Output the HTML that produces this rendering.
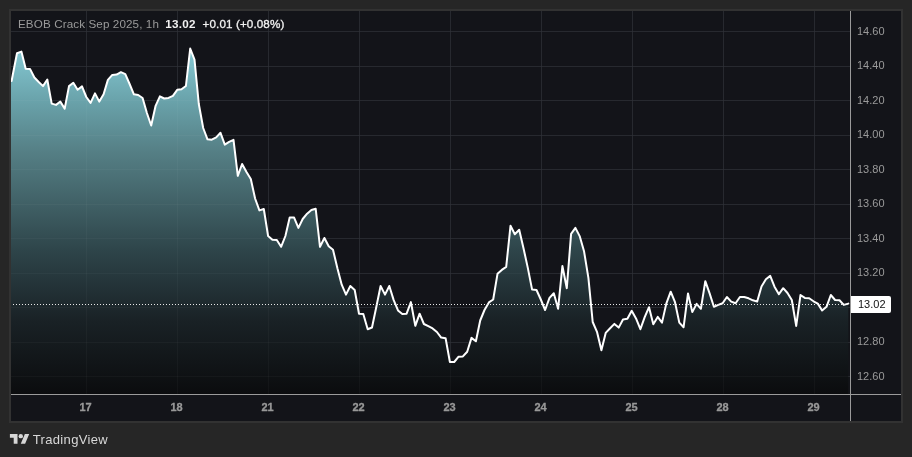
<!DOCTYPE html>
<html><head><meta charset="utf-8"><title>EBOB Crack Sep 2025</title>
<style>
html,body{margin:0;padding:0;}
body{will-change:transform;width:912px;height:457px;background:#262626;overflow:hidden;position:relative;font-family:"Liberation Sans",sans-serif;}
#panel{position:absolute;left:9px;top:9px;width:890px;height:410px;border:2px solid #323232;background:#131419;}
svg{position:absolute;left:0;top:0;}
.grid line{stroke:#212329;stroke-width:1;shape-rendering:crispEdges;}
.grid2 line{stroke:rgba(255,255,255,0.03);stroke-width:1;shape-rendering:crispEdges;}
.pl{position:absolute;left:857px;width:40px;font-size:11px;line-height:14px;color:#9a9a9a;white-space:nowrap;}
.dl{position:absolute;top:400px;width:40px;text-align:center;font-size:11px;line-height:14px;font-weight:bold;color:#999999;-webkit-text-stroke:0.3px #999999;}
#title{position:absolute;left:0;top:17px;font-size:11.65px;line-height:14px;color:#9a9a9a;white-space:nowrap;}
#title span,#title b,#title i{position:absolute;top:0;}
#title b{color:#f2f2f2;font-weight:bold;}
#title i{color:#f2f2f2;font-style:normal;}
#last{position:absolute;left:851px;top:296px;width:40px;height:17px;border-radius:0 2px 2px 0;background:#ffffff;color:#111111;font-size:11px;line-height:17px;}
#last span{position:absolute;left:7px;top:0;}
#tv{position:absolute;left:32.8px;top:431.5px;letter-spacing:0.33px;font-size:13px;line-height:16px;color:#d8d8d8;white-space:nowrap;}
</style></head><body>
<div id="panel"></div>
<svg width="912" height="457" viewBox="0 0 912 457">
<defs>
<linearGradient id="ag" gradientUnits="userSpaceOnUse" x1="0" y1="45" x2="0" y2="394">
<stop offset="0.0000" stop-color="rgb(133, 201, 212)"/>
<stop offset="0.0430" stop-color="rgb(127, 193, 203)"/>
<stop offset="0.1576" stop-color="rgb(106, 163, 171)"/>
<stop offset="0.3066" stop-color="rgb(85, 127, 133)"/>
<stop offset="0.5874" stop-color="rgb(46, 69, 74)"/>
<stop offset="0.7937" stop-color="rgb(25, 33, 37)"/>
<stop offset="1.0000" stop-color="rgb(11, 12, 14)"/>
</linearGradient>
<clipPath id="cp"><rect x="11" y="11" width="839" height="383"/></clipPath>
</defs>
<g class="grid"><line x1="11" x2="850" y1="31.5" y2="31.5"/><line x1="11" x2="850" y1="66.5" y2="66.5"/><line x1="11" x2="850" y1="100.5" y2="100.5"/><line x1="11" x2="850" y1="135.5" y2="135.5"/><line x1="11" x2="850" y1="169.5" y2="169.5"/><line x1="11" x2="850" y1="204.5" y2="204.5"/><line x1="11" x2="850" y1="238.5" y2="238.5"/><line x1="11" x2="850" y1="273.5" y2="273.5"/><line x1="11" x2="850" y1="307.5" y2="307.5"/><line x1="11" x2="850" y1="342.5" y2="342.5"/><line x1="11" x2="850" y1="376.5" y2="376.5"/><line y1="11" y2="394" x1="86.5" x2="86.5"/><line y1="11" y2="394" x1="177.5" x2="177.5"/><line y1="11" y2="394" x1="268.5" x2="268.5"/><line y1="11" y2="394" x1="359.5" x2="359.5"/><line y1="11" y2="394" x1="450.5" x2="450.5"/><line y1="11" y2="394" x1="541.5" x2="541.5"/><line y1="11" y2="394" x1="632.5" x2="632.5"/><line y1="11" y2="394" x1="723.5" x2="723.5"/><line y1="11" y2="394" x1="814.5" x2="814.5"/></g>
<g clip-path="url(#cp)">
<polygon points="11,394 11,81.0 11.6,81.0 12.7,75.3 17.0,53.2 21.4,51.6 25.7,68.7 30.0,68.9 34.4,77.5 38.7,82.0 43.0,86.1 47.3,79.5 51.7,103.6 56.0,104.9 60.3,101.6 64.7,108.6 69.0,86.1 73.3,82.8 77.6,89.7 82.0,86.4 86.3,97.0 90.6,102.9 95.0,93.4 99.3,101.6 103.6,94.3 107.9,79.9 112.3,74.9 116.6,74.6 120.9,72.2 125.3,74.2 129.6,84.0 133.9,94.3 138.2,95.0 142.6,98.0 146.9,113.0 151.2,125.5 155.6,105.8 159.9,96.3 164.2,98.5 168.5,97.9 172.9,95.9 177.2,89.8 181.5,89.3 185.9,86.0 190.2,48.5 194.5,59.7 198.8,104.0 203.2,128.0 207.5,139.3 211.8,139.7 216.2,137.4 220.5,132.8 224.8,144.6 229.1,141.8 233.5,139.8 237.8,175.8 242.1,164.0 246.5,172.0 250.8,179.0 255.1,198.5 259.4,210.4 263.8,209.0 268.1,236.0 272.4,239.7 276.8,240.0 281.1,246.8 285.4,236.0 289.7,217.6 294.1,217.6 298.4,227.9 302.7,219.0 307.1,213.7 311.4,210.0 315.7,208.8 320.0,246.8 324.4,238.0 328.7,246.2 333.0,249.7 337.4,268.3 341.7,284.7 346.0,294.6 350.3,286.0 354.7,290.0 359.0,313.7 363.3,314.0 367.7,329.2 372.0,327.5 376.3,307.0 380.6,286.0 385.0,294.6 389.3,286.0 393.6,299.9 398.0,310.4 402.3,314.0 406.6,313.7 410.9,302.1 415.3,325.8 419.6,313.7 423.9,324.0 428.3,326.2 432.6,328.4 436.9,332.0 441.2,337.6 445.6,338.2 449.9,362.0 454.2,362.0 458.6,356.7 462.9,356.4 467.2,351.8 471.5,337.9 475.9,341.3 480.2,320.5 484.5,310.0 488.9,302.4 493.2,299.5 497.5,273.8 501.8,269.9 506.2,266.9 510.5,225.8 514.8,234.3 519.2,229.7 523.5,248.2 527.8,267.9 532.1,289.6 536.5,290.0 540.8,299.5 545.1,310.0 549.5,297.9 553.8,293.2 558.1,308.8 562.4,266.0 566.8,288.2 571.1,233.8 575.4,227.9 579.8,236.4 584.1,251.6 588.4,277.9 592.7,322.0 597.1,332.2 601.4,350.3 605.7,332.9 610.1,328.3 614.4,323.9 618.7,327.6 623.0,319.5 627.4,318.8 631.7,310.8 636.0,318.4 640.4,329.2 644.7,317.1 649.0,307.2 653.3,324.3 657.7,316.9 662.0,322.6 666.3,303.6 670.7,291.7 675.0,302.2 679.3,322.6 683.6,327.2 688.0,293.4 692.3,312.1 696.6,303.9 700.9,308.8 705.3,281.2 709.6,293.4 713.9,306.8 718.3,304.9 722.6,303.2 726.9,297.0 731.2,301.6 735.6,303.2 739.9,297.0 744.2,297.0 748.6,298.3 752.9,300.3 757.2,301.6 761.5,286.4 765.9,279.2 770.2,275.9 774.5,286.7 778.9,294.2 783.2,288.2 787.5,293.0 791.8,300.0 796.2,325.9 800.5,295.0 804.8,297.9 809.2,298.3 813.5,301.3 817.8,303.6 822.1,310.5 826.5,306.8 830.8,295.0 835.1,300.0 839.5,300.3 843.8,304.9 848.3,303.6 848.3,394" fill="url(#ag)"/>
<g class="grid2"><line x1="11" x2="850" y1="31.5" y2="31.5"/><line x1="11" x2="850" y1="66.5" y2="66.5"/><line x1="11" x2="850" y1="100.5" y2="100.5"/><line x1="11" x2="850" y1="135.5" y2="135.5"/><line x1="11" x2="850" y1="169.5" y2="169.5"/><line x1="11" x2="850" y1="204.5" y2="204.5"/><line x1="11" x2="850" y1="238.5" y2="238.5"/><line x1="11" x2="850" y1="273.5" y2="273.5"/><line x1="11" x2="850" y1="307.5" y2="307.5"/><line x1="11" x2="850" y1="342.5" y2="342.5"/><line x1="11" x2="850" y1="376.5" y2="376.5"/><line y1="11" y2="394" x1="86.5" x2="86.5"/><line y1="11" y2="394" x1="177.5" x2="177.5"/><line y1="11" y2="394" x1="268.5" x2="268.5"/><line y1="11" y2="394" x1="359.5" x2="359.5"/><line y1="11" y2="394" x1="450.5" x2="450.5"/><line y1="11" y2="394" x1="541.5" x2="541.5"/><line y1="11" y2="394" x1="632.5" x2="632.5"/><line y1="11" y2="394" x1="723.5" x2="723.5"/><line y1="11" y2="394" x1="814.5" x2="814.5"/></g>
<polyline points="11.6,81.0 12.7,75.3 17.0,53.2 21.4,51.6 25.7,68.7 30.0,68.9 34.4,77.5 38.7,82.0 43.0,86.1 47.3,79.5 51.7,103.6 56.0,104.9 60.3,101.6 64.7,108.6 69.0,86.1 73.3,82.8 77.6,89.7 82.0,86.4 86.3,97.0 90.6,102.9 95.0,93.4 99.3,101.6 103.6,94.3 107.9,79.9 112.3,74.9 116.6,74.6 120.9,72.2 125.3,74.2 129.6,84.0 133.9,94.3 138.2,95.0 142.6,98.0 146.9,113.0 151.2,125.5 155.6,105.8 159.9,96.3 164.2,98.5 168.5,97.9 172.9,95.9 177.2,89.8 181.5,89.3 185.9,86.0 190.2,48.5 194.5,59.7 198.8,104.0 203.2,128.0 207.5,139.3 211.8,139.7 216.2,137.4 220.5,132.8 224.8,144.6 229.1,141.8 233.5,139.8 237.8,175.8 242.1,164.0 246.5,172.0 250.8,179.0 255.1,198.5 259.4,210.4 263.8,209.0 268.1,236.0 272.4,239.7 276.8,240.0 281.1,246.8 285.4,236.0 289.7,217.6 294.1,217.6 298.4,227.9 302.7,219.0 307.1,213.7 311.4,210.0 315.7,208.8 320.0,246.8 324.4,238.0 328.7,246.2 333.0,249.7 337.4,268.3 341.7,284.7 346.0,294.6 350.3,286.0 354.7,290.0 359.0,313.7 363.3,314.0 367.7,329.2 372.0,327.5 376.3,307.0 380.6,286.0 385.0,294.6 389.3,286.0 393.6,299.9 398.0,310.4 402.3,314.0 406.6,313.7 410.9,302.1 415.3,325.8 419.6,313.7 423.9,324.0 428.3,326.2 432.6,328.4 436.9,332.0 441.2,337.6 445.6,338.2 449.9,362.0 454.2,362.0 458.6,356.7 462.9,356.4 467.2,351.8 471.5,337.9 475.9,341.3 480.2,320.5 484.5,310.0 488.9,302.4 493.2,299.5 497.5,273.8 501.8,269.9 506.2,266.9 510.5,225.8 514.8,234.3 519.2,229.7 523.5,248.2 527.8,267.9 532.1,289.6 536.5,290.0 540.8,299.5 545.1,310.0 549.5,297.9 553.8,293.2 558.1,308.8 562.4,266.0 566.8,288.2 571.1,233.8 575.4,227.9 579.8,236.4 584.1,251.6 588.4,277.9 592.7,322.0 597.1,332.2 601.4,350.3 605.7,332.9 610.1,328.3 614.4,323.9 618.7,327.6 623.0,319.5 627.4,318.8 631.7,310.8 636.0,318.4 640.4,329.2 644.7,317.1 649.0,307.2 653.3,324.3 657.7,316.9 662.0,322.6 666.3,303.6 670.7,291.7 675.0,302.2 679.3,322.6 683.6,327.2 688.0,293.4 692.3,312.1 696.6,303.9 700.9,308.8 705.3,281.2 709.6,293.4 713.9,306.8 718.3,304.9 722.6,303.2 726.9,297.0 731.2,301.6 735.6,303.2 739.9,297.0 744.2,297.0 748.6,298.3 752.9,300.3 757.2,301.6 761.5,286.4 765.9,279.2 770.2,275.9 774.5,286.7 778.9,294.2 783.2,288.2 787.5,293.0 791.8,300.0 796.2,325.9 800.5,295.0 804.8,297.9 809.2,298.3 813.5,301.3 817.8,303.6 822.1,310.5 826.5,306.8 830.8,295.0 835.1,300.0 839.5,300.3 843.8,304.9 848.3,303.6" fill="none" stroke="#ffffff" stroke-width="2" stroke-linejoin="round" stroke-linecap="round"/>
</g>
<line x1="13" x2="850" y1="304.5" y2="304.5" stroke="#e8e8e8" stroke-width="1" stroke-dasharray="1 2" shape-rendering="crispEdges"/>
<line x1="850.5" x2="850.5" y1="11" y2="421" stroke="#9b9b9b" stroke-width="1" shape-rendering="crispEdges"/>
<line x1="11" x2="901" y1="394.5" y2="394.5" stroke="#9b9b9b" stroke-width="1" shape-rendering="crispEdges"/>
<g transform="translate(9.9,431.8) scale(0.544)" fill="#d6d6d6"><path d="M14 22H7V11H0V4h14v18zM28 22h-8l7.5-18h8L28 22z"/><circle cx="20" cy="8" r="4"/></g>
</svg>
<div class="pl" style="top:24px">14.60</div><div class="pl" style="top:58px">14.40</div><div class="pl" style="top:93px">14.20</div><div class="pl" style="top:127px">14.00</div><div class="pl" style="top:162px">13.80</div><div class="pl" style="top:196px">13.60</div><div class="pl" style="top:231px">13.40</div><div class="pl" style="top:265px">13.20</div><div class="pl" style="top:334px">12.80</div><div class="pl" style="top:369px">12.60</div><div class="dl" style="left:65.5px">17</div><div class="dl" style="left:156.5px">18</div><div class="dl" style="left:247.5px">21</div><div class="dl" style="left:338.5px">22</div><div class="dl" style="left:429.5px">23</div><div class="dl" style="left:520.5px">24</div><div class="dl" style="left:611.5px">25</div><div class="dl" style="left:702.5px">28</div><div class="dl" style="left:793.5px">29</div>
<div id="title"><span style="left:18px;letter-spacing:0.11px">EBOB Crack Sep 2025, 1h</span><b style="left:165.2px;letter-spacing:0.3px">13.02</b><i style="left:202.6px;letter-spacing:0.11px;-webkit-text-stroke:0.3px #f2f2f2">+0.01 (+0.08%)</i></div>
<div id="last"><span>13.02</span></div>
<div id="tv">TradingView</div>
</body></html>
